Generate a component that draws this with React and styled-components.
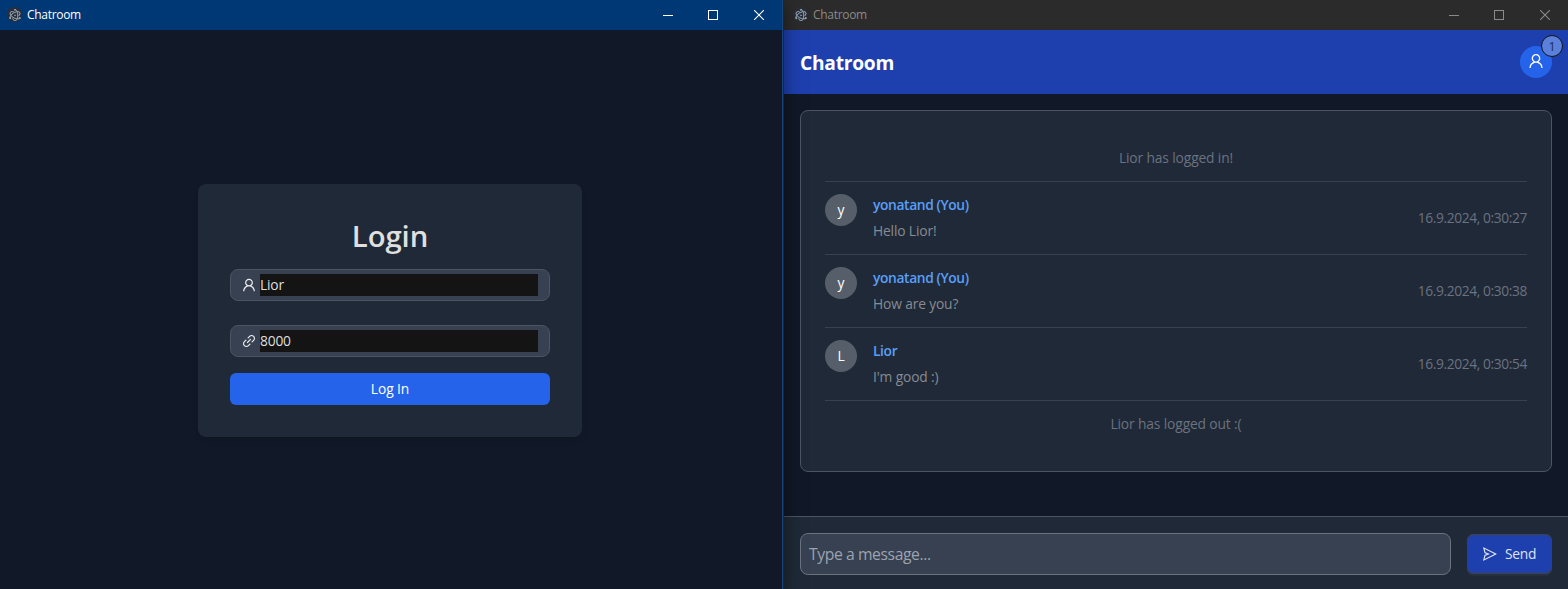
import React from "react";
import styled, { createGlobalStyle } from "styled-components";
import { AiOutlineUser, AiOutlineLink, AiOutlineSend } from "react-icons/ai";
import { SiElectron } from "react-icons/si";

const GlobalStyle = createGlobalStyle`
  *, *::before, *::after { box-sizing: border-box; }
  body { margin: 0; background: #111827; font-family: "Open Sans", "Noto Sans", sans-serif; }
  h1, h2, p { margin: 0; }
`;

const Desktop = styled.div`
  display: flex;
  width: 1568px;
  height: 589px;
  overflow: hidden;
`;

const Window = styled.section`
  display: flex;
  flex-direction: column;
  height: 591px;
  background: #111827;
  flex: ${(p) => (p.$active ? "0 0 783px" : "1")};
  border-right: ${(p) => (p.$active ? "1px solid #17457c" : "0")};
  box-shadow: ${(p) => (p.$active ? "1px 0 0 #1d2430, 0 4px 18px rgba(0, 0, 0, 0.5)" : "none")};
  position: relative;
  z-index: ${(p) => (p.$active ? 1 : 0)};
  padding-left: ${(p) => (p.$active ? 0 : 1)}px;
`;

const TitleBar = styled.header`
  display: flex;
  align-items: center;
  flex: 0 0 30px;
  background: ${(p) => (p.$active ? "#003775" : "#2b2b2b")};
  color: ${(p) => (p.$active ? "#ffffff" : "#8a8a8a")};
  margin-left: ${(p) => (p.$active ? 0 : -1)}px;
  padding-left: ${(p) => (p.$active ? 7 : 10)}px;
`;

const AppIcon = styled.span`
  display: flex;
  align-items: center;
  justify-content: center;
  width: 15px;
  height: 15px;
  margin: -1px 5px 0 0;
  border-radius: 50%;
  background: #2b2e3a;
  color: #a9c3cc;
  svg { width: 12px; height: 12px; stroke: #a9c3cc; stroke-width: 0.8px; }
`;

const TitleText = styled.span`
  flex: 1;
  font-size: 12px;
  line-height: 16px;
  letter-spacing: -0.3px;
`;

const ControlButton = styled.span`
  display: flex;
  align-items: center;
  justify-content: center;
  width: ${(p) => p.$width || 45}px;
  height: 30px;
  padding: 0 ${(p) => (p.$width ? 0 : 1)}px 1px 0;
  svg { display: block; }
`;

const LoginArea = styled.main`
  flex: 1;
  display: flex;
  align-items: center;
  justify-content: center;
  padding-right: 2px;
`;

const LoginCard = styled.div`
  display: flex;
  flex-direction: column;
  width: 384px;
  height: 253px;
  padding: 32px;
  border-radius: 8px;
  background: #1f2937;
  box-shadow: 0 4px 6px -1px rgba(0, 0, 0, 0.1);
`;

const LoginTitle = styled.h1`
  height: 53px;
  padding-top: 1px;
  text-align: center;
  color: #dfdfdf;
  font-size: 29.3px;
  font-weight: 600;
  line-height: 39px;
  letter-spacing: -0.1px;
`;

const Field = styled.label`
  display: flex;
  align-items: center;
  height: 32px;
  padding: 0 11px 0 10px;
  margin-bottom: ${(p) => p.$gap}px;
  border: 1px solid #4b5563;
  border-radius: 8px;
  background: #374151;
  color: #f0f0f0;
  svg { width: 16px; height: 16px; margin-right: 3px; }
`;

const FieldValue = styled.span`
  flex: 1;
  height: 22px;
  background: #141414;
  color: #dfdfdf;
  font-size: 13.8px;
  line-height: 22px;
  letter-spacing: -0.2px;
`;

const LoginButton = styled.button`
  height: 32px;
  border: 0;
  border-radius: 6px;
  background: #2563eb;
  color: #fff;
  font: 13.8px/22px "Open Sans", sans-serif;
  letter-spacing: -0.1px;
`;

const ChatHeader = styled.header`
  display: flex;
  align-items: center;
  justify-content: space-between;
  flex: 0 0 64px;
  padding: 0 16px 0 17px;
  margin-left: -1px;
  background: #1e40af;
`;

const ChatTitle = styled.h2`
  padding-top: 2px;
  color: #fff;
  font-size: 19.2px;
  font-weight: 700;
  line-height: 28px;
  letter-spacing: -0.25px;
`;

const UserAvatar = styled.span`
  position: relative;
  display: flex;
  align-items: center;
  justify-content: center;
  width: 32px;
  height: 32px;
  padding-bottom: 2px;
  border-radius: 50%;
  background: #2563eb;
  color: #fff;
  font-size: 18px;
`;

const Badge = styled.span`
  position: absolute;
  top: -11px;
  right: -11px;
  width: 22px;
  height: 22px;
  border: 1px solid #141414;
  border-radius: 50%;
  background: #5a80dc;
  color: #1c2c50;
  font-size: 12.5px;
  line-height: 21px;
  text-align: center;
`;

const ChatBody = styled.main`
  flex: 1;
  padding: 16px 16px 0;
`;

const MessagePanel = styled.div`
  height: 362px;
  padding: 24px;
  border: 1px solid #4b5563;
  border-radius: 8px;
  background: #1f2937;
`;

const Notice = styled.div`
  padding: 12px 0;
  color: #6b7280;
  text-align: center;
  font-size: 13.8px;
  line-height: 22px;
  letter-spacing: -0.13px;
`;

const Message = styled.article`
  display: flex;
  align-items: center;
  padding: 12px 0;
  border-top: 1px solid #374151;
  &:has(+ ${Notice}) { border-bottom: 1px solid #374151; }
`;

const SenderAvatar = styled.span`
  align-self: flex-start;
  width: 32px;
  height: 32px;
  margin-right: 16px;
  border-radius: 50%;
  background: #565f69;
  color: #fff;
  font-size: 13.8px;
  line-height: 32px;
  text-align: center;
`;

const MessageContent = styled.div`
  flex: 1;
  display: flex;
  flex-direction: column;
  gap: 4px;
  font-size: 13.8px;
  line-height: 22px;
  letter-spacing: -0.15px;
`;

const Sender = styled.strong`
  color: #5a9ff7;
  font-weight: 600;
  letter-spacing: -0.38px;
`;

const Body = styled.p`
  color: #878b92;
`;

const Time = styled.time`
  color: #6b7280;
  font-size: 13.8px;
  line-height: 22px;
  letter-spacing: -0.39px;
`;

const Composer = styled.footer`
  display: flex;
  align-items: center;
  gap: 16px;
  flex: 0 0 75px;
  padding: 0 16px;
  margin-left: -1px;
  padding-left: 17px;
  border-top: 1px solid #4b5563;
  background: #1f2937;
`;

const MessageInput = styled.div`
  flex: 1;
  height: 42px;
  padding: 0 8px;
  border: 1px solid #6b7280;
  border-radius: 8px;
  background: #374151;
  color: #9ca3af;
  font-size: 15.7px;
  line-height: 41px;
  letter-spacing: -0.4px;
`;

const SendButton = styled.button`
  display: flex;
  align-items: center;
  gap: 7px;
  width: 85px;
  height: 40px;
  padding: 0 0 0 14px;
  border: 1px solid #424242;
  border-radius: 6px;
  background: #1e40af;
  box-shadow: 0 2px 0 rgba(255, 255, 255, 0.04);
  color: #dfe3ee;
  font: 13.8px/22px "Open Sans", sans-serif;
  letter-spacing: -0.25px;
  svg { width: 16px; height: 16px; }
`;

const messages = [
  { name: "yonatand", own: true, text: "Hello Lior!", time: "16.9.2024, 0:30:27" },
  { name: "yonatand", own: true, text: "How are you?", time: "16.9.2024, 0:30:38" },
  { name: "Lior", own: false, text: "I'm good :)", time: "16.9.2024, 0:30:54" },
];

function WindowTitle({ active }) {
  return (
    <TitleBar $active={active}>
      <AppIcon><SiElectron /></AppIcon>
      <TitleText>Chatroom</TitleText>
      <ControlButton>
        <svg width="10" height="10" stroke="currentColor"><path d="M0 5.5H10" /></svg>
      </ControlButton>
      <ControlButton>
        <svg width="10" height="10" fill="none" stroke="currentColor"><rect x=".5" y=".5" width="9" height="9" /></svg>
      </ControlButton>
      <ControlButton $width={46}>
        <svg width="10" height="10" stroke="currentColor" strokeWidth="1.1"><path d="M0 0L10 10M10 0L0 10" /></svg>
      </ControlButton>
    </TitleBar>
  );
}

export default function App() {
  return (
    <>
      <GlobalStyle />
      <Desktop>
        <Window $active>
          <WindowTitle active />
          <LoginArea>
            <LoginCard>
              <LoginTitle>Login</LoginTitle>
              <Field $gap={24}><AiOutlineUser /><FieldValue>Lior</FieldValue></Field>
              <Field $gap={16}><AiOutlineLink /><FieldValue>8000</FieldValue></Field>
              <LoginButton>Log In</LoginButton>
            </LoginCard>
          </LoginArea>
        </Window>
        <Window>
          <WindowTitle />
          <ChatHeader>
            <ChatTitle>Chatroom</ChatTitle>
            <UserAvatar><AiOutlineUser /><Badge>1</Badge></UserAvatar>
          </ChatHeader>
          <ChatBody>
            <MessagePanel>
              <Notice>Lior has logged in!</Notice>
              {messages.map((m) => (
                <Message key={m.time}>
                  <SenderAvatar>{m.name[0]}</SenderAvatar>
                  <MessageContent>
                    <Sender>{m.own ? `${m.name} (You)` : m.name}</Sender>
                    <Body>{m.text}</Body>
                  </MessageContent>
                  <Time>{m.time}</Time>
                </Message>
              ))}
              <Notice>Lior has logged out :(</Notice>
            </MessagePanel>
          </ChatBody>
          <Composer>
            <MessageInput>Type a message...</MessageInput>
            <SendButton><AiOutlineSend />Send</SendButton>
          </Composer>
        </Window>
      </Desktop>
    </>
  );
}
